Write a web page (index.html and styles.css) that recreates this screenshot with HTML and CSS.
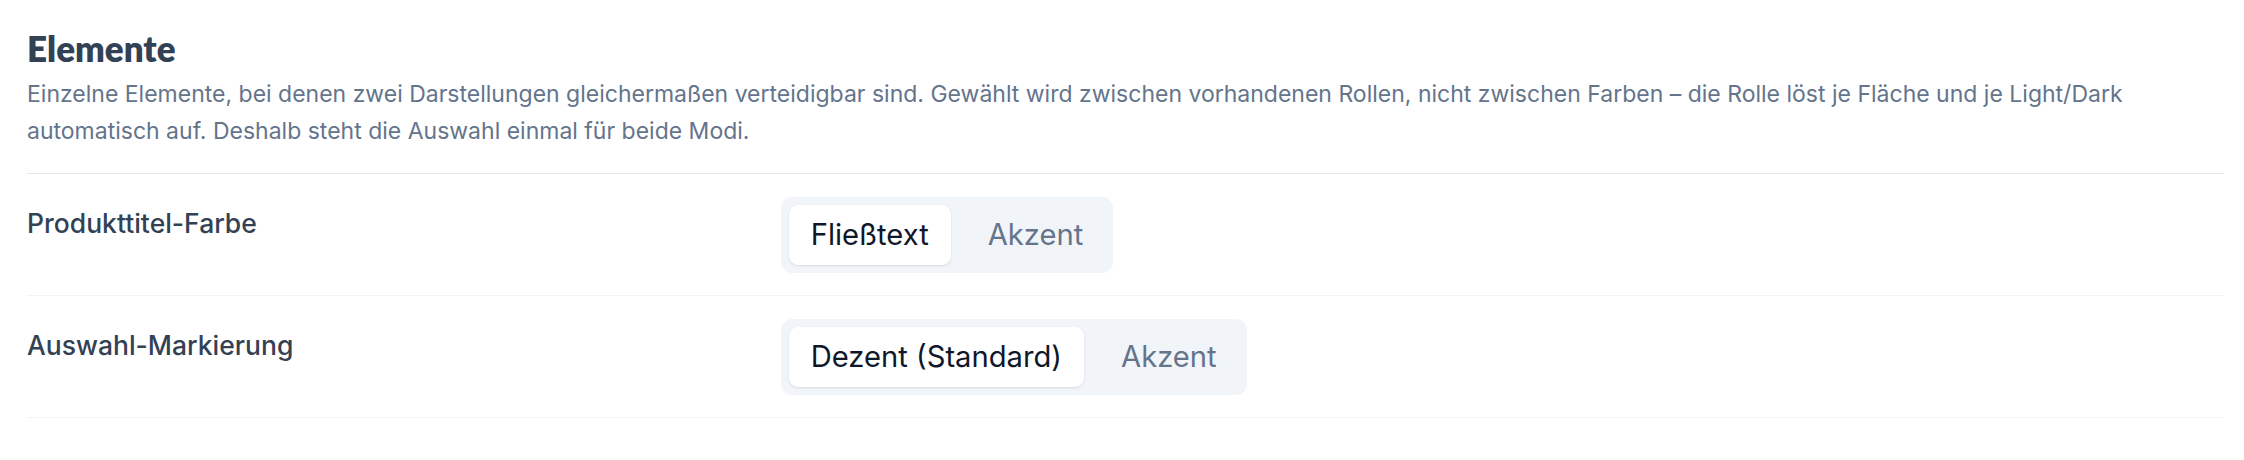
FILE: index.html
```html
<!DOCTYPE html>
<html lang="de">
<head>
<meta charset="utf-8">
<title>Elemente</title>
<link rel="stylesheet" href="styles.css">
</head>
<body>
<section class="section">
  <header class="section-head">
    <h2 class="section-title">Elemente</h2>
    <p class="section-desc">Einzelne Elemente, bei denen zwei Darstellungen gleichermaßen verteidigbar sind. Gewählt wird zwischen vorhandenen Rollen, nicht zwischen Farben – die Rolle löst je Fläche und je Light/Dark automatisch auf. Deshalb steht die Auswahl einmal für beide Modi.</p>
  </header>
  <div class="rows">
    <div class="row">
      <div class="row-label">Produkttitel-Farbe</div>
      <div class="row-control">
        <div class="seg">
          <button class="seg-btn is-active">Fließtext</button>
          <button class="seg-btn">Akzent</button>
        </div>
      </div>
    </div>
    <div class="row">
      <div class="row-label">Auswahl-Markierung</div>
      <div class="row-control">
        <div class="seg">
          <button class="seg-btn is-active">Dezent (Standard)</button>
          <button class="seg-btn">Akzent</button>
        </div>
      </div>
    </div>
  </div>
</section>
</body>
</html>
```
FILE: styles.css
```css
html, body {
  margin: 0;
  padding: 0;
  background: #ffffff;
}
body {
  font-family: Inter, "Noto Sans", sans-serif;
  color: #334155;
}
.section {
  padding: 26px 20px 0 27px;
}
.section-head {
  padding-bottom: 23px;
  border-bottom: 1px solid #e5e7eb;
}
.section-title {
  margin: 0;
  font-family: Lato, "Noto Sans", sans-serif;
  font-weight: 800;
  font-size: 35px;
  line-height: 44px;
  color: #334155;
}
.section-desc {
  margin: 6px 0 0;
  font-size: 23px;
  line-height: 37px;
  color: #64748b;
}
.row {
  display: grid;
  grid-template-columns: minmax(0, 1fr) minmax(0, 2fr);
  column-gap: 32px;
  align-items: start;
  padding: 23px 0 22px;
  border-bottom: 1px solid #f1f5f9;
}
.row-label {
  font-size: 26.5px;
  font-weight: 500;
  line-height: 38px;
  padding-top: 7px;
  color: #334155;
}
.seg {
  display: inline-flex;
  gap: 15px;
  padding: 8px;
  background: #f1f5f9;
  border-radius: 11px;
}
.seg-btn {
  font-family: Inter, "Noto Sans", sans-serif;
  font-size: 29.2px;
  font-weight: 400;
  line-height: 60px;
  height: 60px;
  padding: 0 22px;
  border: 0;
  border-radius: 9px;
  background: transparent;
  color: #64748b;
  cursor: pointer;
}
.seg-btn.is-active {
  background: #ffffff;
  color: #0f172a;
  box-shadow: 0 1px 3px rgba(15, 23, 42, 0.08), 0 1px 2px rgba(15, 23, 42, 0.04);
}
```
